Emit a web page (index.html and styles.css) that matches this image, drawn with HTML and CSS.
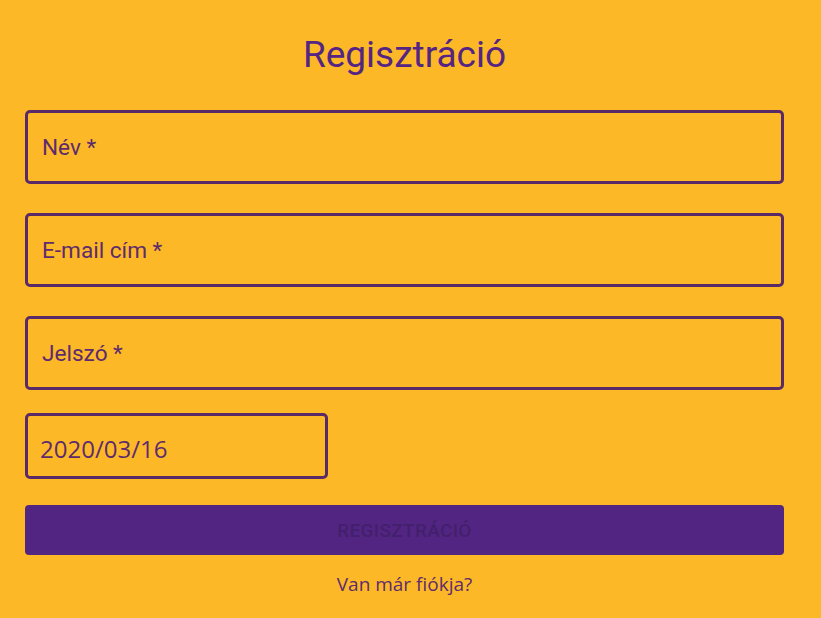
FILE: index.html
```html
<!DOCTYPE html>
<html lang="hu">
<head>
<meta charset="utf-8">
<title>Regisztráció</title>
<link rel="stylesheet" href="styles.css">
</head>
<body>
<main class="page">
  <h1 class="title">Regisztráció</h1>
  <form class="form">
    <label class="field"><span class="field-label">Név *</span></label>
    <label class="field"><span class="field-label">E-mail cím *</span></label>
    <label class="field"><span class="field-label">Jelszó *</span></label>
    <div class="date-field"><span class="date-value">2020/03/16</span></div>
    <button type="button" class="submit">Regisztráció</button>
    <a class="login-link" href="#">Van már fiókja?</a>
  </form>
</main>
</body>
</html>
```

FILE: styles.css
```css
html, body {
  margin: 0;
  padding: 0;
  background: #fdb827;
}

.page {
  padding: 33px 37px 0 25px;
  display: flex;
  flex-direction: column;
}

.title {
  margin: 0;
  font-family: Roboto, "Liberation Sans", sans-serif;
  font-weight: 400;
  font-size: 37px;
  line-height: 43px;
  color: #542582;
  text-align: center;
}

.form {
  display: flex;
  flex-direction: column;
  margin-top: 34px;
}

.field {
  box-sizing: border-box;
  height: 74px;
  border: 3px solid #5a2a66;
  border-radius: 5px;
  display: flex;
  align-items: center;
  padding-left: 14px;
  margin-bottom: 29px;
}

.field-label {
  font-family: Roboto, "Liberation Sans", sans-serif;
  font-size: 22.6px;
  color: #5e2c6c;
}

.date-field {
  box-sizing: border-box;
  width: 303px;
  height: 66px;
  margin-top: -6px;
  border: 3px solid #5a2a66;
  border-radius: 5px;
  display: flex;
  align-items: center;
  padding-left: 12px;
  padding-top: 4px;
}

.date-value {
  font-family: "Open Sans", "Noto Sans", sans-serif;
  font-size: 24px;
  color: #5e2c6c;
}

.submit {
  margin-top: 26px;
  height: 50px;
  border: 0;
  border-radius: 4px;
  background: #522583;
  font-family: Roboto, "Liberation Sans", sans-serif;
  font-size: 19px;
  font-weight: 500;
  letter-spacing: 0.3px;
  text-transform: uppercase;
  color: #43206c;
  padding: 0;
}

.login-link {
  margin-top: 16px;
  align-self: center;
  font-family: "Open Sans", "Noto Sans", sans-serif;
  font-size: 19px;
  color: #5e2c6c;
  text-decoration: none;
}
```
